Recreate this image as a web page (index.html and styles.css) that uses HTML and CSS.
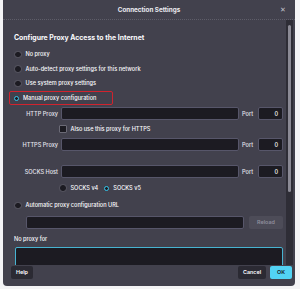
FILE: index.html
```html
<!DOCTYPE html>
<html lang="en">
<head>
  <meta charset="UTF-8" />
  <title>Connection Settings</title>
  <link rel="stylesheet" href="styles.css">
</head>
<body>
  <div class="dialog">
    <div class="titlebar">
      <span></span>
      <span class="title">Connection Settings</span>
      <span class="close">✕</span>
    </div>

    <div class="main">
      <div class="content">
        <h2>Configure Proxy Access to the Internet</h2>

        <div class="radio-row"><span class="radio"></span>No proxy</div>
        <div class="radio-row"><span class="radio"></span>Auto-detect proxy settings for this network</div>
        <div class="radio-row"><span class="radio"></span>Use system proxy settings</div>
        <div class="radio-row marked"><span class="radio on"></span>Manual proxy configuration</div>

        <div class="proxy-row">
          <label>HTTP Proxy</label>
          <div class="field"></div>
          <span class="port-label">Port</span>
          <div class="field port">0</div>
        </div>
        <div class="check-row"><span class="check"></span>Also use this proxy for HTTPS</div>
        <div class="proxy-row">
          <label>HTTPS Proxy</label>
          <div class="field"></div>
          <span class="port-label">Port</span>
          <div class="field port">0</div>
        </div>
        <div class="proxy-row socks">
          <label>SOCKS Host</label>
          <div class="field"></div>
          <span class="port-label">Port</span>
          <div class="field port">0</div>
        </div>
        <div class="socks-versions">
          <span class="radio"></span>SOCKS v4
          <span class="radio on"></span>SOCKS v5
        </div>

        <div class="radio-row"><span class="radio"></span>Automatic proxy configuration URL</div>
        <div class="url-row">
          <div class="field"></div>
          <div class="btn reload">Reload</div>
        </div>

        <div class="noproxy-label">No proxy for</div>
        <div class="textarea"></div>
      </div>
      <div class="scrollbar"><div class="thumb"></div></div>
    </div>

    <div class="footer">
      <div class="btn">Help</div>
      <span class="spacer"></span>
      <div class="btn">Cancel</div>
      <div class="btn primary">OK</div>
    </div>
  </div>
</body>
</html>
```

FILE: styles.css
```css
body {
  margin: 0;
  background: #f4f4f6;
  font-family: 'Inter', 'Liberation Sans', sans-serif;
  color: #fbfbfe;
}

.dialog {
  margin-left: 3px;
  width: 292px;
  height: 286px;
  background: #42414d;
  border-radius: 0 0 4px 4px;
  overflow: hidden;
  display: flex;
  flex-direction: column;
}

.titlebar {
  height: 20px;
  flex: none;
  display: grid;
  grid-template-columns: 20px 1fr 20px;
  align-items: center;
  border-bottom: 1px dotted #5e5d69;
  box-sizing: border-box;
}

.title {
  text-align: center;
  font-size: 6.3px;
  font-weight: 700;
  color: #ececf2;
}

.close {
  font-size: 7px;
  color: #bfbfc9;
  text-align: center;
  padding-right: 4px;
}

.main {
  flex: 1;
  display: flex;
  min-height: 0;
}

.content {
  flex: 1;
  padding: 13px 3px 0 11px;
  overflow: hidden;
  font-size: 5.6px;
  font-weight: 500;
}

h2 {
  margin: 0 0 4px 0;
  font-size: 6.9px;
  font-weight: 700;
  height: 10px;
  line-height: 10px;
}

.radio-row {
  display: flex;
  align-items: center;
  height: 14.5px;
}

.radio {
  width: 5.5px;
  height: 5.5px;
  border-radius: 50%;
  background: #1c1b22;
  border: 0.5px solid #5c5b67;
  margin-right: 4px;
  flex: none;
}

.radio.on {
  width: 3px;
  height: 3px;
  background: #1c1b22;
  border: 1.75px solid #35c7ee;
}

.marked {
  margin-left: -5px;
  padding-left: 4px;
  width: 98px;
  height: 12px;
  margin-top: 0.5px;
  margin-bottom: 1.5px;
  border: 1px solid #d1232e;
  border-radius: 2px;
}

.proxy-row {
  display: flex;
  align-items: center;
  height: 13px;
  margin-top: 2px;
}

.proxy-row label {
  width: 44px;
  text-align: right;
  margin-right: 3px;
  color: #e6e6ee;
}

.field {
  height: 13px;
  box-sizing: border-box;
  background: #1c1b22;
  border: 0.5px solid #57566a;
  border-radius: 2px;
  flex: 1;
}

.port-label {
  width: 13px;
  margin: 0 3px 0 3px;
  color: #e6e6ee;
}

.field.port {
  flex: none;
  width: 25px;
  text-align: right;
  padding-right: 4px;
  line-height: 12px;
}

.check-row {
  display: flex;
  align-items: center;
  height: 14px;
  margin: 2px 0 1px 45px;
}

.check {
  width: 5.5px;
  height: 5.5px;
  background: #1c1b22;
  border: 0.5px solid #6b6a76;
  border-radius: 1px;
  margin-right: 4px;
}

.proxy-row.socks {
  margin-top: 14px;
}

.socks-versions {
  display: flex;
  align-items: center;
  height: 14px;
  margin: 3px 0 3px 45px;
}

.socks-versions .radio.on {
  margin-left: 6px;
}

.url-row {
  display: flex;
  align-items: center;
  height: 13px;
  margin: 3px 0 0 12px;
}

.btn {
  height: 13px;
  line-height: 13px;
  padding: 0 5px;
  background: #2b2a33;
  border-radius: 2px;
  font-weight: 600;
  font-size: 5.4px;
}

.reload {
  margin-left: 5px;
  width: 24px;
  text-align: center;
  background: #4d4c58;
  color: #8f8f9d;
}

.noproxy-label {
  margin-top: 5px;
  height: 10px;
  line-height: 10px;
}

.textarea {
  margin-top: 3px;
  margin-left: 1px;
  height: 40px;
  background: #1c1b22;
  border: 1px solid #47b3d1;
  border-radius: 2px;
}

.scrollbar {
  width: 7px;
  flex: none;
  margin-right: 2px;
  background: #2e2d36;
  padding-top: 5px;
  box-sizing: border-box;
  display: flex;
  justify-content: center;
}

.thumb {
  width: 3px;
  height: 167px;
  background: #8b8a95;
  border-radius: 2px;
}

.footer {
  height: 20px;
  flex: none;
  display: flex;
  align-items: flex-start;
  padding: 1px 3px 0 8px;
  gap: 4px;
}

.spacer {
  flex: 1;
}

.btn.primary {
  background: #52d3f4;
  color: #15141a;
  padding: 0 7px;
}
```
